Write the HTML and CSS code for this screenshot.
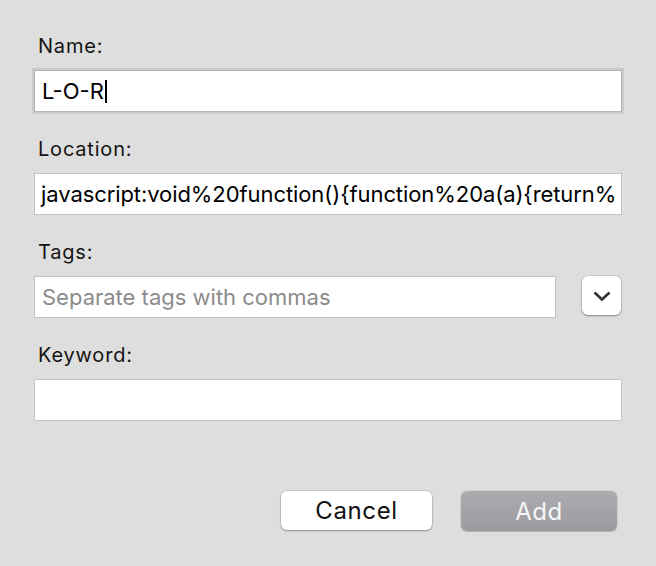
FILE: index.html
```html
<!DOCTYPE html>
<html lang="en">
<head>
<meta charset="utf-8">
<title>Add Bookmark</title>
<link rel="stylesheet" href="styles.css">
</head>
<body>
<div class="dialog">
  <div class="form">
    <div class="group">
      <div class="label">Name:</div>
      <div class="field field-focus"><span class="value">L-O-R</span><span class="caret"></span></div>
    </div>
    <div class="group">
      <div class="label">Location:</div>
      <div class="field"><span class="value value-loc">javascript:void%20function(){function%20a(a){return%</span></div>
    </div>
    <div class="group">
      <div class="label">Tags:</div>
      <div class="tags-row">
        <div class="field field-tags"><span class="placeholder">Separate tags with commas</span></div>
        <div class="drop-btn">
          <svg width="18" height="10" viewBox="0 0 18 10"><path d="M1.5 1.5 L9 8.5 L16.5 1.5" fill="none" stroke="#333" stroke-width="2.6" stroke-linecap="butt" stroke-linejoin="miter"/></svg>
        </div>
      </div>
    </div>
    <div class="group">
      <div class="label">Keyword:</div>
      <div class="field"></div>
    </div>
  </div>
  <div class="buttons">
    <div class="btn btn-cancel">Cancel</div>
    <div class="btn btn-add">Add</div>
  </div>
</div>
</body>
</html>
```

FILE: styles.css
```css
html, body {
  margin: 0;
  padding: 0;
  background: #dedede;
}
body {
  width: 656px;
  height: 566px;
  overflow: hidden;
  font-family: Inter, "Liberation Sans", Arial, sans-serif;
  color: #111;
}
.dialog {
  padding: 34px 34px 0 34px;
}
.form {
  display: flex;
  flex-direction: column;
  gap: 25px;
}
.group {
  display: flex;
  flex-direction: column;
  gap: 12px;
}
.label {
  font-size: 20px;
  line-height: 24px;
  height: 24px;
  padding-left: 4px;
  letter-spacing: 0.8px;
  color: #141414;
}
.field {
  box-sizing: border-box;
  height: 42px;
  background: #fff;
  border: 1px solid #c3c3c3;
  display: flex;
  align-items: center;
  padding: 0 6px 0 7px;
  overflow: hidden;
  white-space: nowrap;
  font-size: 22px;
  color: #000;
}
.value-loc {
  margin-left: -1px;
  letter-spacing: -0.08px;
}
.field-focus {
  border-color: #b4b4b4;
  box-shadow: 0 0 0 2px #cbcbcb;
}
.caret {
  display: inline-block;
  width: 2px;
  height: 23px;
  background: #000;
  margin-left: 1px;
}
.placeholder {
  color: #8b8b8b;
}
.tags-row {
  display: flex;
  align-items: flex-start;
  gap: 26px;
}
.field-tags {
  flex: 1;
}
.drop-btn {
  box-sizing: border-box;
  width: 39px;
  height: 39px;
  margin-right: 1px;
  background: #fff;
  border-radius: 6px;
  box-shadow: 0 0 0 1px rgba(0,0,0,0.08), 0 1px 2px rgba(0,0,0,0.35);
  display: flex;
  align-items: center;
  justify-content: center;
  padding-top: 1px;
}
.buttons {
  display: flex;
  justify-content: flex-end;
  gap: 29px;
  margin-top: 70px;
  padding-right: 5px;
}
.btn {
  box-sizing: border-box;
  height: 39px;
  border-radius: 6px;
  display: flex;
  align-items: center;
  justify-content: center;
  font-size: 24px;
  letter-spacing: 0.6px;
}
.btn-cancel {
  width: 151px;
  background: #fff;
  color: #111;
  box-shadow: 0 0 0 1px rgba(0,0,0,0.08), 0 1px 2px rgba(0,0,0,0.3);
}
.btn-add {
  width: 156px;
  height: 40px;
  background: linear-gradient(#acacb0, #9b9b9f);
  color: #f7f7f7;
  box-shadow: 0 0 0 1px rgba(0,0,0,0.06), 0 1px 1px rgba(0,0,0,0.15);
}
```
